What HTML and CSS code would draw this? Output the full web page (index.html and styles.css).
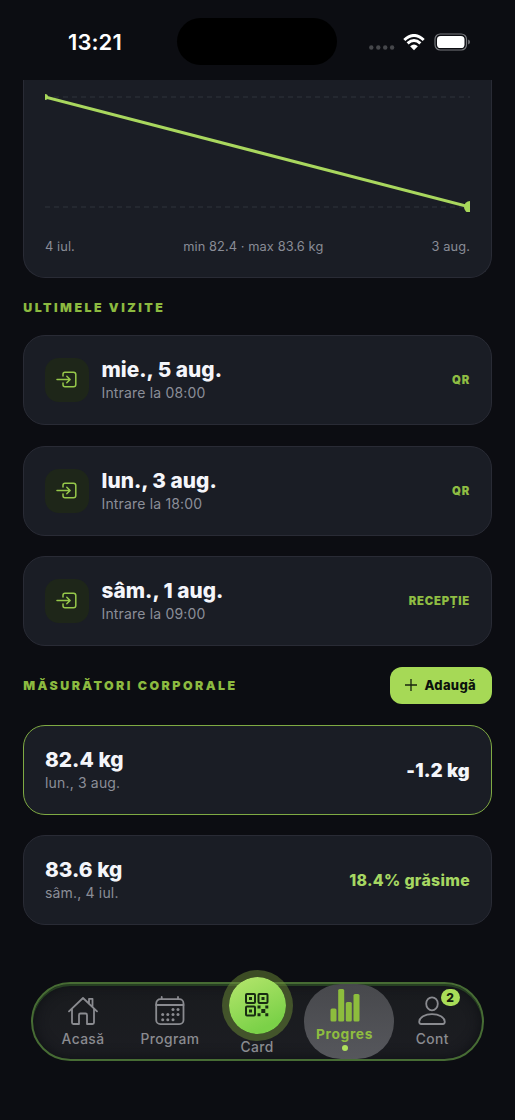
FILE: index.html
```html
<!DOCTYPE html>
<html lang="ro">
<head>
<meta charset="utf-8">
<meta name="viewport" content="width=device-width">
<title>Progres</title>
<link rel="stylesheet" href="styles.css">
</head>
<body>
<svg class="defs" width="0" height="0" aria-hidden="true">
  <symbol id="enter" viewBox="0 0 22 18"><path d="M7 5V3.2Q7 1.2 9 1.2H17.5Q19.8 1.2 19.8 3.5V13.5Q19.8 15.8 17.5 15.8H9Q7 15.8 7 13.8V12M1 8.5H14M10.8 5.2 14.1 8.5 10.8 11.8"/></symbol>
</svg>
<div class="screen">
  <header class="status">
    <time class="clock">13:21</time>
    <div class="island"></div>
    <div class="signals">
      <svg class="dots" width="26" height="5" viewBox="0 0 26 5"><circle cx="2.3" cy="2.5" r="2.2"/><circle cx="9.3" cy="2.5" r="2.2"/><circle cx="16.2" cy="2.5" r="2.2"/><circle cx="23.1" cy="2.5" r="2.2"/></svg>
      <svg class="wifi" width="22" height="17" viewBox="0 0 22 17"><path d="M1.3 6Q11-3 20.7 6M4.6 9.4Q11 3.6 17.4 9.4" /><path class="wifi-core" d="M7.1 12.2Q11 8.7 14.9 12.2L11 16.2Z"/></svg>
      <svg class="battery" width="37" height="18" viewBox="0 0 37 18"><rect class="shell" x="1" y="1" width="31.5" height="16" rx="5.2"/><rect class="charge" x="3" y="3" width="27.5" height="12" rx="3.6"/><path class="tip" d="M34.2 6.5Q36 7.2 36 9T34.2 11.5Z"/></svg>
    </div>
  </header>

  <main class="content">
    <section class="card chart-card">
      <svg class="chart" width="425" height="132" viewBox="0 0 425 132">
        <path class="grid" d="M0 17H425M0 127H425"/>
        <path class="trend" d="M0 17L425 127"/>
        <circle class="point" cx="0" cy="17" r="3"/>
        <circle class="point" cx="425" cy="127" r="6"/>
      </svg>
      <div class="chart-labels"><span>4 iul.</span><span>min 82.4 · max 83.6 kg</span><span>3 aug.</span></div>
    </section>

    <h2 class="heading heading-visits">ULTIMELE VIZITE</h2>
    <div class="list">
      <article class="card row">
        <div class="tile"><svg class="enter" width="22" height="18"><use href="#enter"/></svg></div>
        <div class="info"><h3>mie., 5 aug.</h3><p>Intrare la 08:00</p></div>
        <span class="tag">QR</span>
      </article>
      <article class="card row">
        <div class="tile"><svg class="enter" width="22" height="18"><use href="#enter"/></svg></div>
        <div class="info"><h3>lun., 3 aug.</h3><p>Intrare la 18:00</p></div>
        <span class="tag">QR</span>
      </article>
      <article class="card row">
        <div class="tile"><svg class="enter" width="22" height="18"><use href="#enter"/></svg></div>
        <div class="info"><h3>sâm., 1 aug.</h3><p>Intrare la 09:00</p></div>
        <span class="tag">RECEPȚIE</span>
      </article>
    </div>

    <div class="measure-head">
      <h2 class="heading">MĂSURĂTORI CORPORALE</h2>
      <button class="add"><svg width="12" height="12" viewBox="0 0 12 12"><path d="M6 0V12M0 6H12"/></svg><span>Adaugă</span></button>
    </div>
    <div class="list">
      <article class="card row current">
        <div class="info"><h3>82.4 kg</h3><p>lun., 3 aug.</p></div>
        <strong class="delta">-1.2 kg</strong>
      </article>
      <article class="card row">
        <div class="info"><h3>83.6 kg</h3><p>sâm., 4 iul.</p></div>
        <strong class="fat">18.4% grăsime</strong>
      </article>
    </div>
  </main>

  <nav class="tabs">
    <a class="tab home">
      <svg width="32" height="30" viewBox="0 0 32 30"><path d="M2 15.3 16 2 30 15.3M5 13.2V26.5Q5 28 6.5 28H12V19Q12 17.5 13.5 17.5H18.5Q20 17.5 20 19V28H25.5Q27 28 27 26.5V13.2M22 7.2V2.8H25.5V10.5"/></svg>
      <span>Acasă</span>
    </a>
    <a class="tab program">
      <svg width="30" height="30" viewBox="0 0 30 30"><rect x="1.2" y="3.2" width="27.3" height="25" rx="4.2"/><path d="M1.2 9H28.5M6.7 1V3.2M23 1V3.2"/><g class="days"><circle cx="18" cy="13.5" r="1.5"/><circle cx="23" cy="13.5" r="1.5"/><circle cx="7.7" cy="18.5" r="1.5"/><circle cx="12.8" cy="18.5" r="1.5"/><circle cx="18" cy="18.5" r="1.5"/><circle cx="23" cy="18.5" r="1.5"/><circle cx="7.7" cy="23.7" r="1.5"/><circle cx="12.8" cy="23.7" r="1.5"/><circle cx="18" cy="23.7" r="1.5"/></g></svg>
      <span>Program</span>
    </a>
    <a class="tab pass">
      <div class="orb"><svg width="24" height="24" viewBox="0 0 24 24"><g class="finder"><rect x="1" y="1" width="9" height="9" rx="1"/><rect x="13.5" y="1" width="9" height="9" rx="1"/><rect x="1" y="13.5" width="9" height="9" rx="1"/></g><path class="bits" d="M4 4h3v3H4zM16.5 4h3v3h-3zM4 16.5h3v3H4zM12.5 12.5h3v3h-3zM20.3 12.5h3v3h-3zM16.3 16h4v4h-4zM12.5 20.3h3v3h-3zM20.3 20.3h3v3h-3z"/></svg></div>
      <span>Card</span>
    </a>
    <a class="tab progress">
      <svg width="30" height="34" viewBox="0 0 30 34"><rect x="0.5" y="20.5" width="6" height="13" rx="1.5"/><rect x="8.2" y="1" width="6" height="32.5" rx="1.5"/><rect x="15.8" y="14" width="6" height="19.5" rx="1.5"/><rect x="23.5" y="6" width="6" height="27.5" rx="1.5"/></svg>
      <span>Progres</span>
      <i class="active-dot"></i>
    </a>
    <a class="tab account">
      <svg width="28" height="30" viewBox="0 0 28 30"><ellipse cx="14" cy="7.8" rx="5.8" ry="6.5"/><path d="M3.2 28Q1.2 28 1.2 25.8C1.5 21 7 18.2 14 18.2S26.5 21 26.8 25.8Q26.8 28 24.8 28Z"/></svg>
      <span>Cont</span>
      <b class="badge">2</b>
    </a>
  </nav>
</div>
</body>
</html>
```

FILE: styles.css
```css
* { box-sizing: border-box; }
body { margin: 0; background: #0c0d12; font-family: Inter, "Noto Sans", sans-serif; color: #f4f5fa; }
h2, h3, p { margin: 0; }
.defs { position: absolute; }
.screen { width: 515px; height: 1120px; overflow: hidden; display: flex; flex-direction: column; background: #0c0d12; }

.status { height: 80px; flex: none; display: grid; grid-template-columns: 177px 160px 1fr; padding-top: 18px; }
.clock { padding-left: 68px; font-size: 22px; line-height: 48px; font-weight: 600; letter-spacing: .1px; color: #fff; }
.island { height: 47px; border-radius: 24px; background: #000; }
.signals { display: flex; height: 48px; align-items: center; padding-left: 32px; }
.dots { fill: #46474b; margin-top: 11px; }
.wifi { margin-left: 8px; fill: none; stroke: #fff; stroke-width: 3; }
.wifi-core { fill: #fff; stroke: none; }
.battery { margin-left: 9px; }
.shell { fill: none; stroke: #77787c; stroke-width: 1.2; }
.charge { fill: #fff; }
.tip { fill: #77787c; }

.content { height: 872px; flex: none; padding: 0 23.3px; }
.card { border: 1.3px solid #292b35; border-radius: 22px; background: #1a1d25; }
.chart-card { height: 198.4px; border-top: 0; border-radius: 0 0 22px 22px; padding: 0 20.7px; }
.chart { display: block; }
.grid { stroke: #292c34; stroke-width: 1.3; stroke-dasharray: 5 4; fill: none; }
.trend { stroke: #a9d75e; stroke-width: 3; fill: none; }
.point { fill: #a8d85b; }
.chart-labels { display: flex; justify-content: space-between; margin-top: 26px; font-size: 12.8px; line-height: 18px; letter-spacing: .1px; color: #898c96; }
.heading { font-size: 12.4px; line-height: 18px; font-weight: 900; letter-spacing: 2.45px; color: #8cba40; padding-top: 1px; }
.heading-visits { margin: 19.2px 0 18.4px; }
.list { display: grid; gap: 20.7px; }
.row { height: 90px; display: flex; align-items: center; padding: 0 20.7px; }
.tile { width: 44px; height: 44px; flex: none; display: grid; place-items: center; border-radius: 14px; background: #1e2619; margin-right: 12.5px; }
.enter { fill: none; stroke: #96c84a; stroke-width: 1.5; stroke-linecap: round; stroke-linejoin: round; }
.info { flex: 1; }
.info h3 { font-size: 20.8px; line-height: 26px; font-weight: 800; letter-spacing: .03px; }
.info p { font-size: 14px; line-height: 20px; letter-spacing: .17px; color: #8b8e98; }
.tag { font-size: 11.3px; font-weight: 900; letter-spacing: .75px; color: #8fbd43; }
.measure-head { height: 37px; display: flex; align-items: center; justify-content: space-between; margin: 20.6px 0 20.6px; }
.add { width: 102px; height: 37px; border: 0; border-radius: 12px; background: #a6d956; color: #0c110d; font: 800 13px Inter, sans-serif; letter-spacing: .3px; display: flex; align-items: center; justify-content: center; gap: 7px; padding: 0; }
.add svg { stroke: #18250e; stroke-width: 1.3; }
.current { border-color: #7faa43; }
.delta { font-size: 18.3px; font-weight: 900; letter-spacing: .3px; }
.fat { font-size: 15.8px; font-weight: 800; letter-spacing: .32px; color: #a6d762; }

.tabs { width: 453.5px; height: 79px; flex: none; margin: 29.5px 0 0 30.5px; border: 2px solid #476c34; border-radius: 40px; background: linear-gradient(#191b1e, #1c1d22); box-shadow: inset 0 2px 0 #263f22, inset 0 0 13px #0d0f13; padding: 0 9px 0 7px; display: grid; grid-template-columns: 87px 87px 87px 91px 1fr; }
.tab { display: flex; flex-direction: column; align-items: center; font-size: 13.8px; font-weight: 500; line-height: 18px; letter-spacing: .4px; color: #8a8b90; }
.tab > svg { display: block; fill: none; stroke: #8a8b90; stroke-width: 1.8; stroke-linejoin: round; stroke-linecap: round; }
.home, .program, .account { padding-top: 12.5px; }
.home span, .program span, .account span { margin-top: 3.5px; }
.days { fill: #8a8b90; stroke: none; }
.orb { width: 71px; height: 71px; margin-top: -14px; flex: none; border: 7.5px solid #6b8b3580; border-radius: 50%; background: linear-gradient(155deg, #b6e66d, #7bd148 80%) padding-box; display: grid; place-items: center; }
.finder { stroke: #182b12; stroke-width: 2; fill: none; }
.bits { fill: #182b12; }
.pass span { margin-top: -3px; }
.progress { height: 75px; margin: 0 -2px 0 3px; border-radius: 37px; background: linear-gradient(#47484c, #56575c); padding: 4px 8px 0 0; color: #8fbd40; font-weight: 700; letter-spacing: .65px; }
.progress > svg { stroke: none; fill: #8dbd3d; }
.progress span { margin-top: 3.5px; }
.active-dot { width: 6px; height: 6px; margin-top: 2px; border-radius: 50%; background: #aee15c; }
.account { position: relative; }
.badge { position: absolute; top: 5.5px; left: 49px; width: 19px; height: 17px; border-radius: 9px; background: #a9dd58; color: #14200d; font-size: 12px; line-height: 17px; text-align: center; letter-spacing: 0; font-weight: 800; }
```
